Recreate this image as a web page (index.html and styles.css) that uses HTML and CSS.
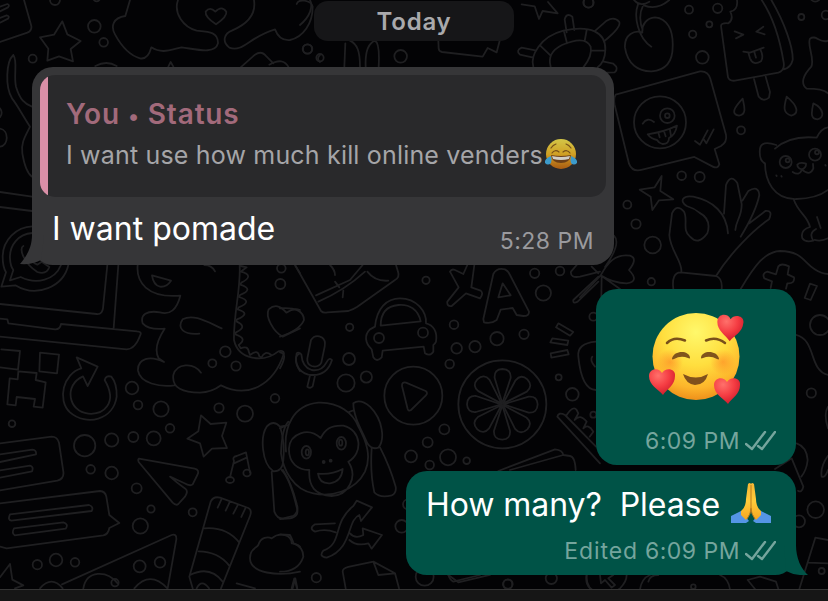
FILE: index.html
```
<!DOCTYPE html>
<html lang="en">
<head>
<meta charset="utf-8">
<title>Chat</title>
<link rel="stylesheet" href="styles.css">
</head>
<body>
<svg class="wallpaper" viewBox="0 0 828 601" aria-hidden="true">
  <g transform="scale(.33333)">
    <path d="M0 20L22 12Q30 14 24 22L0 34M0 54L20 46Q30 48 24 56L0 68M0 126L82 98Q96 92 94 78L72 0"/>
    <path d="M187 64L202 103L242 123L212 147L219 184L177 169L142 182L145 146L120 112L162 104Z"/>
    <circle cx="283" cy="79" r="19"/><circle cx="311" cy="127" r="13"/><circle cx="98" cy="176" r="12"/><circle cx="165" cy="0" r="15"/><circle cx="290" cy="-6" r="10"/><circle cx="923" cy="147" r="14"/>
    <path d="M390 0L376 48C338 53 332 80 345 103C365 140 390 166 420 175Q444 180 454 142C485 162 510 150 545 142C590 148 645 164 654 130C655 95 625 95 590 92C550 82 520 40 534 0"/>
    <path d="M648 73C628 60 615 48 617 35Q630 18 646 35Q665 15 679 35C682 50 661 64 648 73Z"/>
    <path d="M762 0C770 50 735 75 697 91C672 100 665 125 688 143C730 158 745 112 825 88C835 115 850 122 870 120C910 112 938 70 938 20C933 0 895 -5 890 12M960 20C945 40 943 90 960 112M960 165Q948 175 960 186"/>
    <path d="M40 165C18 185 15 260 36 295C52 315 70 350 90 380C75 410 62 430 67 460C72 490 82 520 96 530M40 165C54 185 40 225 48 260C60 300 75 312 96 320"/>
    <path d="M0 325Q10 338 0 352M0 386C28 390 26 438 0 440M286 198Q320 180 350 198M505 200L512 186L520 200M722 202L765 164Q785 150 800 170L820 190M808 194Q850 170 866 202"/>
    <path d="M0 576L96 590M0 621L96 633"/>
  </g>
  <g transform="translate(300 0) scale(.33333)">
    <path d="M0 75C30 50 40 20 30 0M133 200L136 130M180 200C180 155 172 132 150 122M197 200C195 155 205 130 225 122Q240 130 236 200M415 122L416 146Q417 154 426 156L548 170L563 144L590 157L599 122"/>
    <circle cx="22" cy="147" r="14"/><circle cx="60" cy="173" r="11"/><circle cx="302" cy="169" r="19"/><circle cx="866" cy="8" r="15"/>
    <path d="M665 13L704 19L717 57L728 33L773 40L744 6M800 97L794 58Q800 37 817 50L823 90M700 200C690 168 720 110 790 92C870 75 918 95 916 150Q915 185 893 202M700 173L660 164Q646 152 665 143L706 151M886 92L920 62Q944 48 958 66Q964 82 912 124M752 200Q740 158 786 135Q856 105 872 140Q878 168 850 202M720 136L752 167M792 94L801 130M860 90L854 123M916 152L874 151M908 184L940 191Q958 205 944 217L918 218"/>
  </g>
  <g transform="translate(580 0) scale(.33333)">
    <circle cx="25" cy="8" r="15"/><circle cx="327" cy="29" r="12"/><circle cx="413" cy="25" r="14"/><circle cx="388" cy="73" r="9"/><circle cx="338" cy="103" r="11"/><circle cx="367" cy="172" r="19"/><circle cx="664" cy="51" r="9"/><circle cx="738" cy="45" r="13"/><circle cx="483" cy="391" r="12"/><circle cx="305" cy="527" r="13"/><circle cx="359" cy="531" r="15"/><circle cx="142" cy="614" r="12"/><circle cx="168" cy="672" r="14"/><circle cx="218" cy="735" r="25"/><circle cx="214" cy="845" r="11"/><circle cx="706" cy="-10" r="15"/>
    <path d="M174 13C160 50 175 115 214 140M188 20C177 40 180 72 188 90M187 98C165 88 132 103 135 143C142 192 175 215 215 214C260 210 278 182 278 140C280 90 262 55 225 52C200 54 185 73 187 98M162 0Q180 22 208 5M192 16Q230 32 268 0"/>
    <path d="M471 0Q475 30 451 35Q462 58 445 70Q424 68 423 78L444 232Q448 244 465 242L595 218Q615 212 611 187Q592 70 545 0M574 0C615 70 640 145 638 180Q633 202 612 208M522 237L536 290Q550 307 567 293L570 276L557 230M464 94L490 104L468 115M550 80L529 95L554 103M490 155L510 158L551 143M505 158L510 175Q520 198 543 184Q552 170 541 148M523 156L528 173"/>
    <path d="M107 284L360 214Q384 212 391 236L438 404Q442 426 423 438L404 447L418 493Q414 508 397 499L343 471L187 509Q157 518 147 491L104 315Q100 294 107 284Z"/>
    <circle cx="240" cy="367" r="78"/><circle cx="262" cy="347" r="22"/><circle cx="262" cy="347" r="7"/>
    <path d="M188 371Q202 350 222 366M203 403Q255 395 291 377Q286 405 267 414Q267 433 247 432Q235 428 231 420Q213 417 203 403ZM236 401L239 412M253 397L257 409M270 390L273 408M345 423L360 434L383 391M370 416L379 430L401 388"/>
    <path d="M488 296C465 320 450 342 477 347C501 344 493 319 488 296ZM620 290C610 325 610 340 634 347C658 340 654 318 620 290ZM700 310C692 345 694 356 712 358C735 354 732 325 700 310Z"/>
    <path d="M245 528L241 573L280 598L237 601L217 630L212 590L179 569L224 562Z"/>
    <path d="M304 815C308 785 270 750 268 705L276 640Q290 610 312 635C325 660 305 690 330 710Q355 738 382 700C392 670 380 650 358 638Q343 625 320 618C296 602 310 585 340 590C400 602 440 640 444 700M432 641L438 555Q452 520 472 549L485 612C486 650 468 660 466 690M487 602L505 573Q535 554 538 585Q528 635 482 710M508 670L556 633Q580 630 567 658C520 690 450 760 408 828M280 867Q274 818 302 817L408 828Q428 835 425 867"/>
    <path d="M585 446C625 410 680 410 710 413Q723 385 744 382M589 435Q544 420 540 446Q536 482 555 490C555 540 580 600 650 597Q710 596 744 570M641 598C655 640 682 645 690 681Q660 690 667 715Q675 728 700 722Q685 700 708 687M711 651L722 684M704 720Q725 725 744 715"/>
    <circle cx="617" cy="486" r="18"/><circle cx="705" cy="464" r="18"/><circle cx="623" cy="481" r="6"/><circle cx="711" cy="457" r="6"/>
    <path d="M652 494Q660 485 678 491Q679 503 666 508Q652 505 652 494ZM666 509Q658 529 638 516M666 509Q690 530 700 505L699 492M589 526L590 528M604 528L605 530M736 495L737 497M482 867C525 795 555 755 600 753C665 754 670 785 704 808Q725 822 744 822M553 835Q545 820 562 815L588 823L595 799Q604 788 627 799L623 823L642 832Q645 852 622 850L618 866M553 835L576 844L572 864M690 851L711 858L692 900L674 894Z"/>
    <path d="M102 707Q125 730 75 801M62 826C82 790 105 760 150 767Q175 775 147 810Q180 845 140 850Q100 850 62 826L120 867M62 826L0 892M55 820L35 800M65 828L64 890"/>
  </g>
  <g transform="translate(740 0) scale(.33333)">
    <path d="M264 122C240 132 228 102 210 116C200 135 225 175 214 200C190 225 180 250 200 266Q250 266 264 280"/>
  </g>
  <g transform="translate(0 60) scale(.33333)">
    <path d="M97 499C50 500 8 540 8 590Q8 620 18 637L4 680L46 676C110 715 190 680 205 615M97 519C55 522 28 555 30 595Q31 618 40 630L30 661L62 651C110 675 165 660 183 615M70 558C55 565 72 610 112 636Q140 645 148 621L125 605L112 614Q90 605 86 580"/>
  </g>
  <g transform="translate(0 260) scale(.33333)">
    <path d="M0 132L290 162Q306 164 309 145L322 15M355 15L341 204M0 176L22 178L25 190L165 208Q180 209 183 192L411 214Q426 215 421 225Q406 267 380 268L0 230M4 268L60 273L54 329L0 322M120 278L177 284L171 340L118 334ZM55 334L110 339L107 360L137 367L128 443L101 440L105 417L50 411L47 436L22 433L29 355L53 358Z"/>
    <path d="M244 325C190 340 170 420 210 457C260 500 340 480 350 410Q351 370 334 350Q318 345 314 360C355 430 310 465 265 461C205 455 190 375 249 349L263 378L293 320L230 292Z"/>
    <path d="M413 15C408 65 440 115 541 107Q525 170 480 157C440 150 420 165 428 190Q445 210 494 206C475 235 462 270 476 295L492 306C450 285 412 295 414 332C420 370 480 382 523 376M603 338C580 306 530 310 520 345C515 385 550 398 600 398Q635 397 663 376C740 415 820 380 852 280Q850 270 835 274C790 310 715 300 702 240C700 160 723 90 719 15M456 46L513 62Q500 82 480 80Q460 75 456 46ZM665 205C620 185 580 160 548 178C530 205 550 225 598 221M613 15Q635 15 645 34"/>
    <path d="M722 18L740 22L722 35Q766 46 724 68L721 74Q764 88 720 105L717 111Q761 124 716 142L713 148Q755 160 711 178L709 184Q745 200 708 217L706 223Q744 235 716 255L722 265Q744 255 747 277L750 285Q774 266 778 289L784 293Q795 270 813 284"/>
    <path d="M848 230C820 215 795 170 806 148Q832 125 859 158Q880 143 900 150M848 230L900 205M900 280Q875 290 900 333M885 15L900 40"/>
    <circle cx="844" cy="25" r="13"/><circle cx="841" cy="72" r="15"/><circle cx="676" cy="275" r="16"/><circle cx="637" cy="310" r="12"/><circle cx="708" cy="318" r="14"/><circle cx="396" cy="384" r="19"/><circle cx="414" cy="435" r="13"/><circle cx="483" cy="447" r="23"/><circle cx="510" cy="505" r="13"/><circle cx="461" cy="535" r="21"/><circle cx="400" cy="531" r="15"/><circle cx="335" cy="540" r="20"/><circle cx="254" cy="557" r="32"/><circle cx="272" cy="628" r="13"/><circle cx="335" cy="639" r="19"/><circle cx="410" cy="685" r="15"/><circle cx="453" cy="747" r="11"/><circle cx="421" cy="798" r="23"/><circle cx="578" cy="757" r="12"/><circle cx="657" cy="444" r="14"/><circle cx="735" cy="461" r="24"/><circle cx="825" cy="415" r="13"/><circle cx="36" cy="491" r="10"/><circle cx="112" cy="914" r="14"/><circle cx="168" cy="900" r="19"/><circle cx="225" cy="907" r="13"/><circle cx="419" cy="919" r="18"/><circle cx="480" cy="907" r="16"/><circle cx="345" cy="968" r="11"/>
    <path d="M603 466L632 492L679 488L666 528L681 564L636 566L611 590L600 550L562 536L595 514ZM417 596L584 626Q600 630 592 645L578 673Q570 680 552 669L510 650Q530 668 556 686Q566 694 555 710L535 732Q528 738 518 728L416 606Q413 598 417 596Z"/>
    <path d="M0 550L155 530Q172 530 177 548L190 635Q193 656 172 662L0 691M0 583L97 569Q110 570 108 583L0 606M0 631L90 617Q102 620 96 634L0 653M0 730L300 693Q316 694 319 710L328 765L358 789L328 804Q325 823 310 826L20 865L0 860M30 763L267 735Q282 740 275 753L34 782Q22 780 30 763ZM42 805L190 787Q207 792 197 806L44 826Q34 820 42 805ZM690 652L702 603Q696 590 710 588L738 577L750 638M702 610L740 593"/>
    <ellipse cx="690" cy="660" rx="12" ry="9"/><ellipse cx="741" cy="639" rx="11" ry="10"/>
    <path d="M186 973L515 825Q530 820 529 838L503 985M120 985Q155 945 188 985M250 985C260 930 320 930 353 970M403 985Q450 930 502 985M30 912L0 952M30 912L37 959L70 976L45 985M568 950L632 725Q640 708 660 713L745 744Q757 750 750 768L663 985M568 950L578 985M665 717L653 743M690 724L677 752M714 734L700 761M736 745L724 771M614 805Q680 800 718 848M596 874Q655 875 687 916M570 945Q630 915 668 965M590 985Q605 955 627 985M710 970L765 985M875 985L883 955L891 985"/>
    <path d="M900 935C835 950 750 940 750 895C750 865 770 865 775 855C782 830 805 830 815 835C840 815 875 825 875 850Q890 850 900 860M840 500Q820 478 800 500C780 530 785 610 820 634Q848 635 850 600Q855 545 840 500M840 500L862 496M815 636L823 755Q832 778 850 775L880 768Q897 755 891 735Q875 670 849 630"/>
  </g>
  <g transform="translate(280 260) scale(.33333)">
    <path d="M45 15L123 153Q130 160 142 157L205 153Q220 148 232 140L345 60Q360 52 354 35L348 15M108 106L210 60L248 15M115 125Q195 90 255 35M262 35Q285 65 325 62M150 15Q165 30 165 45M165 65L178 82M190 92L188 112M0 145Q70 140 72 180Q60 210 0 230M0 277Q25 280 0 325"/>
    <path d="M285 200C290 145 320 115 360 115C410 115 440 155 438 190C460 195 473 215 468 245Q465 252 460 255L460 275Q450 290 435 280L431 260L308 272L305 292Q290 308 280 292L275 268C255 250 252 225 270 208ZM302 197C302 160 320 138 355 135C390 132 415 150 422 184ZM302 197L422 184"/>
    <circle cx="297" cy="234" r="15"/><circle cx="429" cy="218" r="15"/>
    <path d="M93 240Q105 222 125 232Q138 240 134 260L124 308Q115 324 95 318Q80 312 82 295ZM50 280Q40 330 85 344Q140 352 156 300Q148 290 139 308Q125 335 95 330Q67 322 64 283Q55 275 50 280ZM90 346L82 380Q92 387 98 379L105 347"/>
    <circle cx="438" cy="61" r="11"/><circle cx="209" cy="202" r="11"/><circle cx="207" cy="297" r="18"/><circle cx="198" cy="369" r="26"/><circle cx="259" cy="351" r="17"/><circle cx="522" cy="194" r="13"/><circle cx="530" cy="265" r="16"/><circle cx="585" cy="260" r="17"/><circle cx="651" cy="236" r="20"/><circle cx="732" cy="223" r="14"/><circle cx="509" cy="312" r="13"/><circle cx="764" cy="40" r="14"/><circle cx="840" cy="33" r="13"/><circle cx="790" cy="99" r="23"/><circle cx="836" cy="352" r="9"/><circle cx="877" cy="403" r="19"/><circle cx="940" cy="464" r="9"/><circle cx="940" cy="170" r="12"/><circle cx="493" cy="508" r="15"/><circle cx="443" cy="547" r="15"/><circle cx="393" cy="589" r="18"/><circle cx="449" cy="615" r="13"/><circle cx="504" cy="592" r="24"/><circle cx="560" cy="602" r="10"/><circle cx="365" cy="799" r="19"/><circle cx="109" cy="953" r="14"/><circle cx="684" cy="972" r="14"/><circle cx="814" cy="955" r="17"/><circle cx="434" cy="950" r="27"/><circle cx="384" cy="733" r="15"/>
    <circle cx="400" cy="407" r="87"/><path d="M378 368L437 393Q445 399 437 407L393 450Q386 455 383 447L366 378Q365 365 378 368Z"/>
    <circle cx="667" cy="433" r="132"/>
    <g><path id="segment" d="M667 430L644 354Q642 328 667 327Q694 328 692 354Z"/><use href="#segment" transform="rotate(45 667 433)"/><use href="#segment" transform="rotate(90 667 433)"/><use href="#segment" transform="rotate(135 667 433)"/><use href="#segment" transform="rotate(180 667 433)"/><use href="#segment" transform="rotate(225 667 433)"/><use href="#segment" transform="rotate(270 667 433)"/><use href="#segment" transform="rotate(315 667 433)"/></g>
    <path d="M510 35Q515 25 525 30L550 42L562 15M583 15L574 82L602 92Q612 100 600 115L558 100L515 138Q500 140 502 125L536 82L510 35M610 177L640 42Q650 22 675 28Q685 32 690 45L747 155Q748 168 730 168L710 165L698 144L662 149L650 180Q635 192 612 187ZM655 112L668 70L692 106ZM960 35L900 50Q870 55 873 35L890 15M955 50L880 120Q878 133 893 125L955 65"/>
    <path d="M835 190L880 216L870 227L828 202ZM817 235L865 242L862 255L811 247ZM812 280L862 270L866 283L814 293ZM948 245Q890 250 895 290Q905 390 948 390M937 290Q928 300 945 320M832 470L960 610M832 470Q835 455 855 465L948 560M860 465Q880 435 890 450L895 460L884 480Q900 460 920 485L910 505Q925 490 940 515L929 530"/>
    <path d="M18 575C10 500 40 435 115 428C175 425 220 460 235 500C260 545 275 590 255 635C225 695 150 712 100 700C40 690 10 630 3 580C5 530 10 500 25 485M122 534C85 500 30 520 27 565C25 610 55 630 88 630C85 680 105 705 155 708C205 708 235 650 205 605C250 580 245 510 190 497C150 495 135 510 122 534ZM114 641Q155 645 188 627Q185 665 150 670Q118 672 114 641ZM205 457L222 450M220 430Q240 415 270 440C310 480 315 540 295 563Q275 570 262 550C245 510 220 470 220 430ZM275 565Q270 640 283 697Q300 715 335 706Q350 700 347 680Q330 620 300 562M0 505L20 495M5 630Q30 655 51 745Q58 770 30 775L0 777"/>
    <ellipse cx="79" cy="577" rx="14" ry="19"/><ellipse cx="184" cy="550" rx="14" ry="19"/><ellipse cx="82" cy="577" rx="5" ry="9"/><ellipse cx="182" cy="548" rx="5" ry="9"/><circle cx="131" cy="606" r="3"/><circle cx="152" cy="602" r="3"/>
    <path d="M165 790L105 793Q85 805 105 815Q135 805 167 817M220 738L230 722L276 742L243 783L238 765C200 780 220 865 140 893Q115 890 130 872C190 850 155 790 220 738ZM210 820Q225 838 250 825L248 805L306 825L275 866L265 850Q230 860 208 840M197 985L188 935Q188 925 205 921L280 905L345 940L357 985M280 905L295 945L345 940M0 823L30 825Q40 845 40 850Q70 860 70 890Q55 935 0 935M38 985L46 955L52 985M655 633L825 568Q848 570 850 585L870 588Q885 590 887 630M690 630L850 585M505 945L535 967L630 945M920 945Q915 970 930 985"/>
  </g>
  <g transform="translate(740 180) scale(.33333)">
    <path d="M168 465C230 480 205 570 264 585M264 680Q250 700 264 745M264 827Q240 860 245 890Q255 895 264 870M105 867L155 835L190 920Q185 940 174 932M170 790Q200 800 203 840Q200 870 184 890M264 1080L226 1073L178 1227M205 1148L264 1150M23 1200L60 1190L108 1205L115 1227M23 1200L45 1227"/>
    <circle cx="240" cy="435" r="30"/><circle cx="214" cy="639" r="14"/><circle cx="227" cy="989" r="25"/><circle cx="177" cy="1024" r="18"/><circle cx="245" cy="1173" r="9"/>
  </g>
  <g transform="translate(400 465) scale(.33333)">
    <path d="M240 330L160 350Q150 345 145 330M560 330C555 390 625 400 660 370Q680 350 680 330M600 330L603 355L615 345L635 368L645 360L625 340L640 330M720 373Q725 340 750 330M960 330Q985 340 990 373M775 330Q750 330 745 350"/>
    <circle cx="323" cy="358" r="14"/><circle cx="880" cy="365" r="7"/>
  </g>
</svg>

<main class="chat">
  <div class="date">Today</div>

  <article class="bubble incoming">
    <svg class="tail tail-left" viewBox="0 0 24 30"><path d="M12 0C12 13 6 22 0 29Q12 30 21 25L24 0Z"/></svg>
    <section class="quote">
      <h2>You <span class="dot">•</span> Status</h2>
      <p><span>I want use how much kill online venders</span><svg class="joy" viewBox="0 0 34 32">
        <defs><linearGradient id="joyFace" x2="0" y2="1"><stop stop-color="#d3c648"/><stop offset=".5" stop-color="#d0a024"/><stop offset="1" stop-color="#a95b12"/></linearGradient></defs>
        <circle cx="17" cy="16" r="15" fill="url(#joyFace)"/>
        <path d="M7 10Q9 7 12 6M22 6Q25 7 27 10M8 15Q11 11 15 14M19 14Q23 11 26 15" fill="none" stroke="#76501a" stroke-width="1.2" stroke-linecap="round"/>
        <path d="M7 17Q17 19 27 17Q26 25 17 25T7 17Z" fill="#6b3f18"/><path d="M8 18Q17 20 26 18L25 21Q17 23 9 21Z" fill="#d0cdc5"/>
        <path d="M7 18Q0 21 1 25Q4 28 7 25Q8 22 7 18M27 18Q34 21 33 25Q30 28 27 25Q26 22 27 18" fill="#3d9bcb"/>
      </svg></p>
    </section>
    <div class="reply"><p class="message">I want pomade</p><time>5:28 PM</time></div>
  </article>

  <article class="bubble outgoing emoji-bubble">
    <svg class="love" viewBox="0 0 96 92">
      <defs>
        <radialGradient id="loveFace" cx=".5" cy=".22" r=".8"><stop stop-color="#fff86b"/><stop offset=".48" stop-color="#ffde3e"/><stop offset=".8" stop-color="#fdb52b"/><stop offset="1" stop-color="#ec8b18"/></radialGradient>
        <radialGradient id="blush"><stop stop-color="#ff8424" stop-opacity=".6"/><stop offset="1" stop-color="#ff8424" stop-opacity="0"/></radialGradient>
        <radialGradient id="heartFill" cx=".35" cy=".25" r=".85"><stop stop-color="#ff716b"/><stop offset=".5" stop-color="#f53d43"/><stop offset="1" stop-color="#c91628"/></radialGradient>
      </defs>
      <circle cx="48" cy="44.5" r="43.5" fill="url(#loveFace)"/>
      <circle cx="22" cy="50" r="13" fill="url(#blush)"/><circle cx="75" cy="50" r="13" fill="url(#blush)"/>
      <path d="M19 31Q26 24 37 28.500M58 28.500Q68 24 77 31" fill="none" stroke="#79501a" stroke-width="2.5" stroke-linecap="round"/>
      <path d="M24 46.500C26 38 41 38 42 45.500C42 47 41 46.500 40 46Q33 43 26 47Q24 48 24 46.500ZM53 45.500C54 38 69 38 71 46.500Q71 48 69 47Q62 43 55 46Q53 47 53 45.500Z" fill="#80541c"/>
      <path d="M35 62Q48 69 60 62Q57 73 47 73Q38 72 35 62Z" fill="#80501c"/>
      <g fill="url(#heartFill)"><path id="heart" d="M15 83C10 77 1 73 1 64C1 56 11 55 14 61C17 55 28 56 27 64C27 73 19 77 15 83Z"/><use href="#heart" transform="translate(65 9)"/><use href="#heart" transform="rotate(5 80 20) translate(67.500 -54)"/></g>
    </svg>
    <div class="meta"><time>6:09 PM</time><svg class="checks" viewBox="0 0 31 20"><path d="M1 13L7 18L20 1M13 15L17 18L30 1"/></svg></div>
  </article>

  <article class="bubble outgoing text-bubble">
    <svg class="tail tail-right" viewBox="0 0 24 30"><path d="M12 0C12 13 17 24 24 30Q11 31 2 26L0 0Z"/></svg>
    <div class="line"><p class="message">How many?&nbsp; Please</p><svg class="pray" viewBox="0 0 42 42">
      <defs><linearGradient id="hands" x2="0" y2="1"><stop stop-color="#f6b735"/><stop offset=".5" stop-color="#ffcc3b"/><stop offset="1" stop-color="#f5a51f"/></linearGradient></defs>
      <path d="M1 34L11 29L19 39L16 41H1ZM41 34L31 29L23 39L26 41H41Z" fill="#5595e5"/>
      <path d="M18 2Q20 0 21 2V25Q21 32 16 38L11 33V29Q16 25 16 17ZM24 2Q22 0 21 2V25Q21 32 26 38L31 33V29Q26 25 26 17Z" fill="url(#hands)"/>
      <path d="M21 3V26Q21 32 17 37M21 26Q21 32 25 37" fill="none" stroke="#b97b1e" stroke-width="1"/>
    </svg></div>
    <div class="meta"><time><span>Edited</span> 6:09 PM</time><svg class="checks" viewBox="0 0 31 20"><path d="M1 13L7 18L20 1M13 15L17 18L30 1"/></svg></div>
  </article>
</main>
<footer class="composer"></footer>
</body>
</html>
```
FILE: styles.css
```
* { box-sizing: border-box; }
body {
  margin: 0;
  height: 601px;
  overflow: hidden;
  display: flex;
  flex-direction: column;
  background: #030305;
  font-family: Inter, "Liberation Sans", sans-serif;
}
h2, p { margin: 0; }
svg { display: block; }
.wallpaper {
  position: absolute;
  z-index: -1;
  width: 828px;
  height: 601px;
  fill: none;
  stroke: #1f1f21;
  stroke-width: 5.4;
  stroke-linecap: round;
  stroke-linejoin: round;
}
.chat {
  flex: 1;
  min-height: 0;
  display: flex;
  flex-direction: column;
  padding: 1px 32px 0;
}
.date {
  align-self: center;
  flex: none;
  width: 200px;
  height: 40px;
  border-radius: 14px;
  background: #161618;
  color: #a9a9ac;
  font-size: 24px;
  font-weight: 600;
  letter-spacing: 0.8px;
  line-height: 41px;
  text-align: center;
}
.bubble { position: relative; flex: none; border-radius: 21px; }
.incoming {
  width: 582px;
  height: 198px;
  margin-top: 26px;
  padding: 8px;
  background: #363638;
}
.quote {
  height: 122px;
  padding: 22px 0 0 26px;
  border-radius: 15px;
  background: linear-gradient(to right, #d98fa7 8px, #29292b 8px);
}
.quote h2 {
  color: #a26a7b;
  font-size: 28px;
  font-weight: 600;
  letter-spacing: 0.85px;
  line-height: 34px;
  white-space: nowrap;
}
.dot { display: inline-block; width: 12px; font-size: 22px; line-height: 22px; }
.quote p {
  display: flex;
  align-items: center;
  margin-top: 7px;
  color: #a5a5a8;
  font-size: 25px;
  letter-spacing: 0.18px;
  line-height: 34px;
  white-space: nowrap;
}
.joy { width: 34px; height: 32px; flex: none; margin: -3px 0 0 1px; }
.reply { display: flex; justify-content: space-between; padding: 12px 12px 0 12px; }
.message {
  color: #fff;
  font-size: 32px;
  line-height: 40px;
  white-space: nowrap;
}
time, .meta { font-size: 23px; line-height: 28px; letter-spacing: 0.5px; white-space: nowrap; }
.reply time { margin-top: 18px; color: #9a9a9e; }
.outgoing { align-self: flex-end; background: #005347; }
.emoji-bubble { width: 200px; height: 176px; margin-top: 24px; padding-top: 23px; }
.love { width: 96px; height: 92px; margin-left: 52px; }
.meta {
  display: flex;
  justify-content: flex-end;
  align-items: center;
  gap: 5px;
  padding-right: 20px;
  color: #75a59d;
}
.meta span { letter-spacing: 0.9px; }
.emoji-bubble .meta { margin-top: 23px; }
.checks {
  width: 31px;
  height: 20px;
  fill: none;
  stroke: #75a59d;
  stroke-width: 2.4;
  stroke-linecap: round;
  stroke-linejoin: round;
}
.text-bubble { width: 390px; height: 104px; margin-top: 6px; padding-top: 11px; }
.line { display: flex; justify-content: space-between; padding: 0 24px 0 20px; }
.line .message { margin-top: 3px; letter-spacing: -0.06px; }
.pray { width: 42px; height: 42px; }
.text-bubble .meta { margin-top: 12px; }
.tail { position: absolute; bottom: 0; width: 24px; height: 30px; }
.tail-left { left: -12px; fill: #363638; }
.tail-right { right: -12px; fill: #005347; }
.composer { flex: none; height: 12px; border-top: 1px solid #343434; background: #161616; }
```
